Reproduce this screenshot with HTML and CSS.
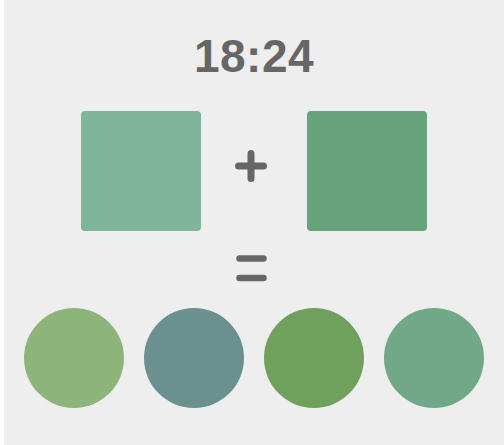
FILE: index.html
```html
<!DOCTYPE html>
<html>
<head>
<meta charset="utf-8">
<link rel="stylesheet" href="styles.css">
</head>
<body>
<div class="app">
  <div class="time">18:24</div>
  <div class="mix">
    <div class="swatch sq1"></div>
    <div class="op plus" role="img" aria-label="+">
      <svg width="40" height="40" viewBox="0 0 40 40"><path d="M7.5 16H32.5M20 3.5V28.5" stroke="#666666" stroke-width="7" stroke-linecap="round" fill="none"/></svg>
    </div>
    <div class="swatch sq2"></div>
  </div>
  <div class="op equals" role="img" aria-label="=">
    <svg width="40" height="34" viewBox="0 0 40 34"><path d="M8.5 6.5H32.5M8.5 26H32.5" stroke="#666666" stroke-width="6.5" stroke-linecap="round" fill="none"/></svg>
  </div>
  <div class="results">
    <div class="dot c1"></div>
    <div class="dot c2"></div>
    <div class="dot c3"></div>
    <div class="dot c4"></div>
  </div>
</div>
</body>
</html>
```

FILE: styles.css
```css
html, body {
  margin: 0;
  padding: 0;
  background: #ffffff;
}
.app {
  margin-left: 4px;
  width: 500px;
  height: 445px;
  background: #eeeeee;
  display: flex;
  flex-direction: column;
  align-items: center;
  font-family: "Liberation Sans", Arial, sans-serif;
  color: #666666;
}
.time {
  margin-top: 28px;
  font-size: 46px;
  font-weight: bold;
  line-height: 56px;
  height: 56px;
  letter-spacing: 0.5px;
}
.mix {
  margin-top: 27px;
  display: flex;
  align-items: center;
}
.swatch {
  width: 120px;
  height: 120px;
  border-radius: 4px;
}
.sq1 { background: #7fb59a; }
.sq2 { background: #68a47b; }
.op svg {
  display: block;
}
.plus {
  width: 106px;
  height: 120px;
  display: flex;
  justify-content: center;
  padding-top: 39px;
  padding-right: 7px;
  box-sizing: border-box;
}
.equals {
  margin-top: 21px;
  height: 34px;
  margin-right: 6px;
}
.results {
  margin-top: 22px;
  display: flex;
  gap: 20px;
}
.dot {
  width: 100px;
  height: 100px;
  border-radius: 50%;
}
.c1 { background: #8db57a; }
.c2 { background: #6a9090; }
.c3 { background: #6fa05c; }
.c4 { background: #70a888; }
```
